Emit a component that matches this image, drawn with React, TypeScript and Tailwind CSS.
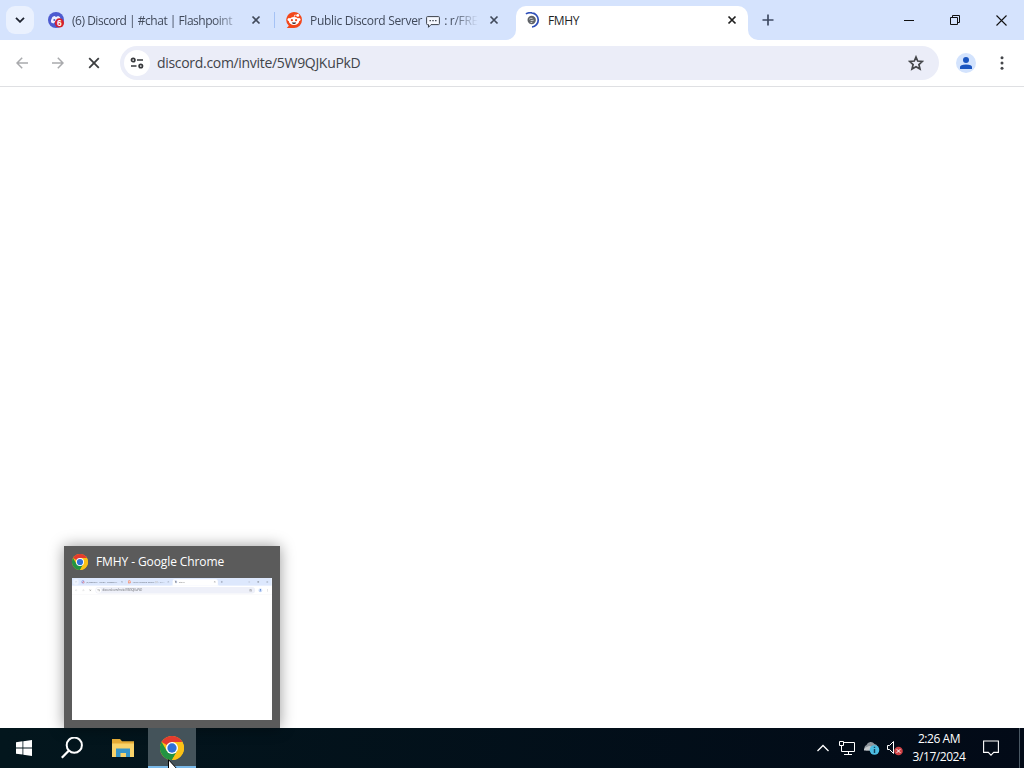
import type { ReactNode } from "react";

interface IconProps {
  className?: string;
}

function ChromeLogo({ className }: IconProps) {
  return (
    <svg viewBox="0 0 48 48" className={className}>
      <circle cx="24" cy="24" r="24" fill="#fbc116" />
      <path d="M24 24 3.2 12A24 24 0 0 1 44.8 12H24Z" fill="#e33b2e" />
      <path d="M3.2 12A24 24 0 0 0 24 48L34.4 30 24 24 13.6 30Z" fill="#229342" />
      <path d="M24 12H44.8A24 24 0 0 1 24 48L34.4 30Z" fill="#fbc116" />
      <circle cx="24" cy="24" r="12" fill="#fff" />
      <circle cx="24" cy="24" r="9.3" fill="#2f70d8" />
    </svg>
  );
}

function DiscordFavicon() {
  return (
    <svg viewBox="0 0 16 16" className="size-4 shrink-0">
      <circle cx="8" cy="8" r="8" fill="#4d5bd0" />
      <path
        d="M4.400 4.900q1.500-.8 2.500-.8l.4.7h1.800l.4-.7q1.300.2 2.300.8 1.500 2.300 1.400 5.300-1.200 1-2.700 1.200l-.6-1H6.200l-.5 1Q4 11.200 2.900 10.200 2.900 7.300 4.400 4.900Z"
        fill="#eef0ff"
      />
      <circle cx="6.300" cy="8" r="1" fill="#4d5bd0" />
      <circle cx="11.400" cy="10.900" r="4.600" fill="#d3202c" />
      <text
        x="11.400"
        y="14"
        textAnchor="middle"
        className="fill-white font-['Liberation_Sans'] text-[8.500px] font-bold"
      >
        6
      </text>
    </svg>
  );
}

function RedditFavicon() {
  return (
    <svg viewBox="0 0 16 16" className="size-4 shrink-0">
      <path d="M8 0a8 8 0 1 1 0 16H.8l2-2.200A8 8 0 0 1 8 0Z" fill="#f2471b" />
      <circle cx="11.800" cy="3.400" r="1.400" fill="#fff" />
      <circle cx="3" cy="7.500" r="1.500" fill="#fff" />
      <circle cx="13" cy="7.500" r="1.500" fill="#fff" />
      <path d="M8 5.400 8.700 3l2.500.4" fill="none" stroke="#fff" strokeWidth=".7" />
      <ellipse cx="8" cy="9" rx="5.200" ry="4" fill="#fff" />
      <circle cx="5.900" cy="8.200" r="1.100" fill="#f2471b" />
      <circle cx="10.100" cy="8.200" r="1.100" fill="#f2471b" />
      <path d="M5.800 10.500h4.400Q9.600 12 8 12t-2.200-1.500Z" fill="#3b2424" />
    </svg>
  );
}

function LoadingFavicon() {
  return (
    <svg viewBox="0 0 16 16" className="size-4 shrink-0">
      <circle cx="7.700" cy="8" r="4.200" fill="#5f6368" />
      <path d="M5.200 7.200q1.500-1.500 3.300-.8M6.500 8.700l3.200-.5M6.500 10.700l1.900-.5" fill="none" stroke="#d3d6da" />
      <path d="M1.900 1.900Q4.500.3 8 .9A7.100 7.100 0 0 1 8 15" fill="none" stroke="#2f4fb8" strokeWidth="1.700" />
    </svg>
  );
}

function SpeechBubble() {
  return (
    <svg viewBox="0 0 14 12" className="mx-[4px] mt-[2px] h-3 w-[14px] shrink-0" fill="none" stroke="#3c424c">
      <path d="M1.500.6h11q.9 0 .9.900v6.200q0 .9-.9.900H5L2.500 11.300V8.600h-1Q.6 8.600.6 7.700V1.500Q.6.6 1.500.6Z" fill="#f5f8ff" />
      <path d="M3.500 4.600h1.400M6.300 4.600h1.400M9.100 4.600h1.400" strokeWidth="1.300" />
    </svg>
  );
}

function Cross({ className }: IconProps) {
  return (
    <svg viewBox="0 0 10 10" className={className} fill="none" stroke="currentColor">
      <path d="m1.500 1.500 7 7m0-7-7 7" strokeWidth="1.700" />
    </svg>
  );
}

function TabFoot({ className }: IconProps) {
  return (
    <svg viewBox="0 0 10 10" className={className}>
      <path d="M10 0v10H0A10 10 0 0 0 10 0Z" fill="#fff" />
    </svg>
  );
}

interface TabProps {
  icon: ReactNode;
  className: string;
  titleClass: string;
  children: ReactNode;
}

function Tab({ icon, className, titleClass, children }: TabProps) {
  return (
    <div className={`flex items-center ${className}`}>
      {icon}
      <div className={`ml-2 flex items-center whitespace-nowrap pt-px text-[12px] ${titleClass}`}>
        {children}
      </div>
      <Cross className="ml-auto size-[10px] shrink-0" />
    </div>
  );
}

function TabStrip() {
  return (
    <div className="flex h-10 items-center bg-[#d5e3fd] text-[#414a5b]">
      <div className="ml-[6px] flex size-7 shrink-0 items-center justify-center rounded-[9px] bg-[#eaf1fe]">
        <svg viewBox="0 0 10 6" className="h-[6px] w-[10px]" fill="none" stroke="#1f2430" strokeWidth="1.800">
          <path d="m1 .8 4 4 4-4" />
        </svg>
      </div>
      <Tab
        icon={<DiscordFavicon />}
        className="ml-[14px] w-[213px]"
        titleClass="w-[168px] tracking-[-0.480px] [mask-image:linear-gradient(to_right,black_142px,transparent_172px)]"
      >
        (6) Discord | #chat | Flashpoint
      </Tab>
      <div className="ml-[13px] h-4 w-px bg-[#a5c2f5]" />
      <Tab
        icon={<RedditFavicon />}
        className="ml-[11px] w-[213px]"
        titleClass="w-[170px] tracking-[-0.300px] [mask-image:linear-gradient(to_right,black_142px,transparent_168px)]"
      >
        Public Discord Server
        <SpeechBubble />: r/FRE
      </Tab>
      <div className="relative ml-[17px] h-[34px] w-[232px] self-end rounded-t-[10px] bg-white pb-[6px] text-[#1f1f1f]">
        <TabFoot className="absolute -left-[10px] bottom-0 size-[10px]" />
        <TabFoot className="absolute -right-[10px] bottom-0 size-[10px] -scale-x-100" />
        <Tab icon={<LoadingFavicon />} className="ml-[8px] h-full w-[213px]" titleClass="w-[150px] tracking-[-0.400px]">
          FMHY
        </Tab>
      </div>
      <svg viewBox="0 0 12 12" className="ml-[14px] size-3" stroke="#3f4b63" strokeWidth="1.700">
        <path d="M6 .5v11M.5 6h11" />
      </svg>
      <svg viewBox="0 0 10 10" className="ml-auto size-[10px]" stroke="#111">
        <path d="M0 5.500h10" />
      </svg>
      <svg viewBox="0 0 10 10" className="ml-9 size-[10px]" fill="none" stroke="#111">
        <path d="M.5 2.500h7v7h-7ZM2.500 2.500v-2h7v7h-2" />
      </svg>
      <svg viewBox="0 0 11 11" className="mr-[17px] ml-9 size-[11px]" stroke="#111" strokeWidth="1.100">
        <path d="m.5.5 10 10m0-10-10 10" />
      </svg>
    </div>
  );
}

function Toolbar() {
  return (
    <div className="flex h-[47px] items-center border-b border-[#dfe0e3] bg-white">
      <svg viewBox="0 0 12 12" className="ml-4 size-3" fill="none" stroke="#a9aaad" strokeWidth="1.500">
        <path d="M12 6H1M6.200.8 1 6l5.200 5.200" />
      </svg>
      <svg viewBox="0 0 12 12" className="ml-6 size-3" fill="none" stroke="#a9aaad" strokeWidth="1.500">
        <path d="M0 6h11M5.800.8 11 6l-5.200 5.200" />
      </svg>
      <svg viewBox="0 0 12 12" className="ml-6 size-3" stroke="#3c3e40" strokeWidth="1.800">
        <path d="m1.200 1.200 9.600 9.600m0-9.600-9.600 9.600" />
      </svg>
      <div className="ml-5 flex h-[34px] w-[819px] items-center rounded-full bg-[#ebedf8]">
        <div className="ml-1 flex size-[26px] items-center justify-center rounded-full bg-white">
          <svg viewBox="0 0 14 12" className="h-3 w-[14px]" fill="none" stroke="#36383b" strokeWidth="1.700">
            <circle cx="3.200" cy="3" r="1.700" />
            <path d="M7 3h6M1 9h5.500" />
            <circle cx="10.800" cy="9" r="1.700" />
          </svg>
        </div>
        <span className="ml-[7px] pb-px text-[14px] tracking-[-0.310px] text-[#41444a]">
          discord.com/invite/5W9QJKuPkD
        </span>
        <svg viewBox="0 0 16 16" className="mr-[15px] ml-auto size-4" fill="none" stroke="#45474b" strokeWidth="1.700">
          <path d="m8 2 1.700 4 4.700.4-3.500 3.100 1.100 4.500L8 11.700 4 14l1.100-4.500-3.500-3.100L6.300 6Z" />
        </svg>
      </div>
      <div className="ml-[17px] flex size-5 items-center justify-center rounded-full bg-[#d3e3fd]">
        <svg viewBox="0 0 12 12" className="size-3" fill="#1b55c0">
          <circle cx="6" cy="3" r="3" />
          <path d="M0 12V10Q0 7.400 6 7.400T12 10v2Z" />
        </svg>
      </div>
      <svg viewBox="0 0 4 14" className="ml-6 h-[14px] w-1" fill="#45474b">
        <circle cx="2" cy="1.800" r="1.500" />
        <circle cx="2" cy="7" r="1.500" />
        <circle cx="2" cy="12.200" r="1.500" />
      </svg>
    </div>
  );
}

// Window preview shown above the taskbar button
function TaskPreview() {
  return (
    <div className="absolute bottom-0 left-16 h-[182px] w-[216px] bg-[#5b5b5b] px-2 shadow-[0_0_14px_rgba(0,0,0,0.400)]">
      <div className="flex h-8 items-center gap-2 text-[12px] text-white">
        <ChromeLogo className="size-4" />
        <span className="tracking-[-0.100px]">FMHY - Google Chrome</span>
      </div>
      <div className="h-[142px] w-[200px] overflow-hidden bg-white">
        <div className="h-[150px] w-[1024px] origin-top-left scale-[0.195] opacity-80">
          <TabStrip />
          <Toolbar />
        </div>
      </div>
    </div>
  );
}

function Tray() {
  return (
    <div className="ml-auto flex h-full items-center text-white">
      <svg viewBox="0 0 12 8" className="h-2 w-3" fill="none" stroke="#fff" strokeWidth="1.300">
        <path d="m.5 7 5.500-5.500L11.500 7" />
      </svg>
      <svg viewBox="0 0 16 14" className="ml-[10px] h-[14px] w-4" fill="none" stroke="#fff">
        <path d="M4.500 1.500h11v9H2.500v-6M9.500 10.500v3M5 13.500h8M.5.500h4v4h-4ZM2.500 4.500v2" />
      </svg>
      <svg viewBox="0 0 17 14" className="ml-2 h-[14px] w-[17px]">
        <path d="M3 9.500A3 3 0 0 1 3.500 4 4.500 4.500 0 0 1 11.500 3 4 4 0 0 1 14 9.500Z" fill="#8e959c" />
        <path d="M1 9.500Q.5 6.500 4 6q3-2.500 6 1v2.500Z" fill="#c3c8cc" />
        <circle cx="11.500" cy="9" r="4.800" fill="#4cbde2" />
        <path d="M11.500 8v4M11.500 5.800v1.300" stroke="#16435c" strokeWidth="1.400" />
      </svg>
      <svg viewBox="0 0 16 16" className="ml-[7px] size-4" fill="none">
        <path d="M.5 5.500h2l4-4v12l-4-4h-2Z" stroke="#fff" />
        <circle cx="11.500" cy="11" r="4.300" fill="#cf4246" />
        <path d="m9.700 9.200 3.600 3.600m0-3.600-3.600 3.600" stroke="#fff" />
      </svg>
      <div className="ml-[2px] w-[68px] text-center text-[12px] leading-[18px] tracking-[-0.450px]">
        <div>2:26 AM</div>
        <div>3/17/2024</div>
      </div>
      <svg viewBox="0 0 16 16" className="ml-[10px] size-4" fill="none" stroke="#fff" strokeWidth="1.100">
        <path d="M.6 1h14.800v11.400h-4.700L8 15.100l-2.700-2.700H.6Z" />
      </svg>
      <div className="ml-5 h-full w-px bg-[#4a5864]" />
      <div className="w-1" />
    </div>
  );
}

function Taskbar() {
  return (
    <div className="flex h-10 items-center bg-linear-to-r from-[#03161d] to-[#020a17]">
      <svg viewBox="0 0 16 16" className="ml-4 size-4" fill="#fff">
        <path d="m0 2.200 6.500-.9v6.200H0ZM7.300 1.200 16 0v7.500H7.300ZM0 8.400h6.500v6.200L0 13.800ZM7.300 8.400H16V16l-8.700-1.200Z" />
      </svg>
      <svg viewBox="0 0 22 22" className="ml-[29px] size-[22px]" fill="none" stroke="#fff" strokeWidth="2">
        <circle cx="13.300" cy="8.200" r="7.600" />
        <path d="M8 13.500.8 20.800" strokeWidth="2.300" />
      </svg>
      <svg viewBox="0 0 22 18" className="ml-[29px] h-[18px] w-[22px]">
        <path d="M0 0h8l2 2.300h12V18H0Z" fill="#e7ad37" />
        <path d="M0 4.500h22V18H0Z" fill="#f9d36a" />
        <path d="M4 9.500h14v8.500h-4v-4H8.500v4H4Z" fill="#3795c9" />
      </svg>
      <div className="relative ml-[14px] flex h-10 w-12 items-center justify-center border-b-2 border-[#79b9e9] bg-[#44535a] pt-[2px]">
        <ChromeLogo className="size-6" />
        <svg viewBox="0 0 12 19" className="absolute top-[31px] left-[20px] h-[19px] w-3">
          <path d="M.5.700v16L4.200 13.200l2.500 5.200 2-.9-2.400-5.100h5Z" fill="#fff" stroke="#000" />
        </svg>
      </div>
      <Tray />
    </div>
  );
}

export default function App() {
  return (
    <div className="flex h-screen w-[1024px] flex-col overflow-hidden bg-white font-['Open_Sans','Noto_Sans',sans-serif]">
      <TabStrip />
      <Toolbar />
      <main className="relative flex-1">
        <TaskPreview />
      </main>
      <Taskbar />
    </div>
  );
}
